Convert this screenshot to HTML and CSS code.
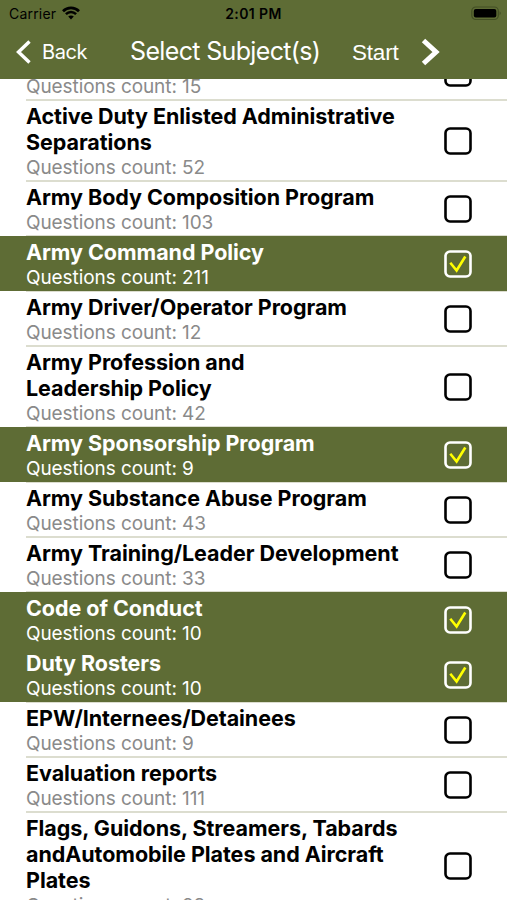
FILE: index.html
```html
<!DOCTYPE html>
<html lang="en">
<head>
  <meta charset="UTF-8" />
  <meta name="viewport" content="width=device-width, initial-scale=1" />
  <title>Select Subject(s)</title>
  <link rel="stylesheet" href="styles.css">
</head>
<body>
  <header class="header">
    <div class="status">
      <div class="carrier">
        <span>Carrier</span>
        <svg class="wifi" width="18" height="14" viewBox="0 0 18 14">
          <path d="M1 5.2C5.5 .7 12.500 .7 17 5.200" fill="none" stroke="#000" stroke-width="2.700" />
          <path d="M3.900 8.200C6.800 5.300 11.200 5.300 14.100 8.200" fill="none" stroke="#000" stroke-width="2.500" />
          <path d="M9 13.500L6.200 10.600C7.800 9.200 10.200 9.200 11.800 10.600Z" />
        </svg>
      </div>
      <span class="time">2:01 PM</span>
      <svg class="battery" width="31" height="15" viewBox="0 0 31 15">
        <rect x=".8" y="1" width="26.500" height="12.500" rx="4" fill="none" stroke="#434f25" stroke-width="1.200" />
        <rect x="2.800" y="3" width="22.500" height="8.600" rx="2" />
        <path d="M28.600 5.200Q31 7.200 28.600 9.300Z" fill="#434f25" />
      </svg>
    </div>
    <nav class="nav">
      <div class="back">
        <svg width="16" height="26" viewBox="0 0 16 26">
          <path d="M14.500 2.500L3.500 13L14.500 23.500" fill="none" stroke="#fff" stroke-width="3.400" />
        </svg>
        <span>Back</span>
      </div>
      <h1>Select Subject(s)</h1>
      <div class="start">
        <span>Start</span>
        <svg width="20" height="28" viewBox="0 0 20 28">
          <path d="M2.500 2.500L15 14L2.500 25.500" fill="none" stroke="#fff" stroke-width="5" />
        </svg>
      </div>
    </nav>
  </header>

  <main class="viewport">
    <ul class="list" id="list"></ul>
  </main>

  <script src="script.js"></script>
</body>
</html>
```
FILE: styles.css
```css
* {
  box-sizing: border-box;
}
body {
  margin: 0;
  height: 100vh;
  display: flex;
  flex-direction: column;
  overflow: hidden;
  background: #fff;
  color: #000;
  font-family: Inter, 'Liberation Sans', sans-serif;
}

/* Header */
.header {
  flex: none;
  height: 79px;
  background: #5e6c35;
}
.status {
  height: 27px;
  padding: 0 5px 0 9px;
  display: grid;
  grid-template-columns: 1fr auto 1fr;
  align-items: center;
  font-size: 14px;
}
.carrier {
  display: flex;
  align-items: center;
  gap: 6px;
  letter-spacing: 0.2px;
}
.wifi {
  margin-bottom: 2px;
}
.time {
  margin-right: 4px;
  font-size: 14px;
  font-weight: 600;
  letter-spacing: 0.4px;
}
.battery {
  justify-self: end;
}
.nav {
  height: 50px;
  padding-left: 15px;
  display: flex;
  align-items: center;
  color: #fff;
}
.nav svg {
  display: block;
}
.back {
  width: 115px;
  display: flex;
  align-items: center;
  gap: 11px;
  font-size: 20px;
  line-height: 28px;
  letter-spacing: -0.4px;
}
h1 {
  width: 222px;
  margin: 0;
  padding-bottom: 2px;
  font-size: 25px;
  line-height: 36px;
  font-weight: 400;
  letter-spacing: -0.65px;
  white-space: nowrap;
}
.start {
  display: flex;
  align-items: center;
  gap: 22px;
  font-family: 'Liberation Sans', sans-serif;
  font-size: 22.5px;
  letter-spacing: -0.2px;
}
.start span {
  padding-top: 2px;
}

/* Subject list, scrolled so the first row is partly hidden */
.viewport {
  flex: 1;
  overflow: hidden;
}
.list {
  list-style: none;
  margin: -34px 0 0;
  padding: 0;
}
.row {
  display: flex;
  align-items: center;
  padding-left: 26px;
  background:
    linear-gradient(#dcddcf, #dcddcf) 26px 0 / 100% 1px no-repeat,
    linear-gradient(#dcddcf, #dcddcf) 26px 100% / 100% 1px no-repeat;
}
.text {
  width: 418px;
  padding-top: 3px;
}
.title,
.count {
  line-height: 26px;
  white-space: pre-line;
}
.title {
  font-size: 21.5px;
  font-weight: 650;
  letter-spacing: -0.05px;
}
.count {
  font-size: 19px;
  letter-spacing: -0.08px;
  color: #8a8a8a;
}
.box {
  display: block;
  margin-top: 1px;
  fill: none;
  stroke: #000;
  stroke-width: 2.6;
}
.row.selected {
  background: #5e6c35;
  color: #fff;
}
.selected .count {
  color: #fff;
}
.selected .box {
  stroke: #fff;
}
.selected .tick {
  stroke: #ffff00;
}
```
FILE: script.js
```js
const subjects = [
  { title: 'Accident Prevention', count: 15 },
  { title: 'Active Duty Enlisted Administrative\nSeparations', count: 52 },
  { title: 'Army Body Composition Program', count: 103 },
  { title: 'Army Command Policy', count: 211, selected: true },
  { title: 'Army Driver/Operator Program', count: 12 },
  { title: 'Army Profession and\nLeadership Policy', count: 42 },
  { title: 'Army Sponsorship Program', count: 9, selected: true },
  { title: 'Army Substance Abuse Program', count: 43 },
  { title: 'Army Training/Leader Development', count: 33 },
  { title: 'Code of Conduct', count: 10, selected: true },
  { title: 'Duty Rosters', count: 10, selected: true },
  { title: 'EPW/Internees/Detainees', count: 9 },
  { title: 'Evaluation reports', count: 111 },
  { title: 'Flags, Guidons, Streamers, Tabards\nandAutomobile Plates and Aircraft\nPlates', count: 28 }
];

document.getElementById('list').innerHTML = subjects.map(s => `
  <li class="row${s.selected ? ' selected' : ''}">
    <div class="text">
      <div class="title">${s.title}</div>
      <div class="count">Questions count: ${s.count}</div>
    </div>
    <svg class="box" width="28" height="28" viewBox="0 0 28 28">
      <rect x="1.500" y="1.500" width="25" height="25" rx="4.500" />
      ${s.selected ? '<path class="tick" d="M6.300 12.800L12.600 20.500L21.300 6.500" />' : ''}
    </svg>
  </li>`).join('');
```
